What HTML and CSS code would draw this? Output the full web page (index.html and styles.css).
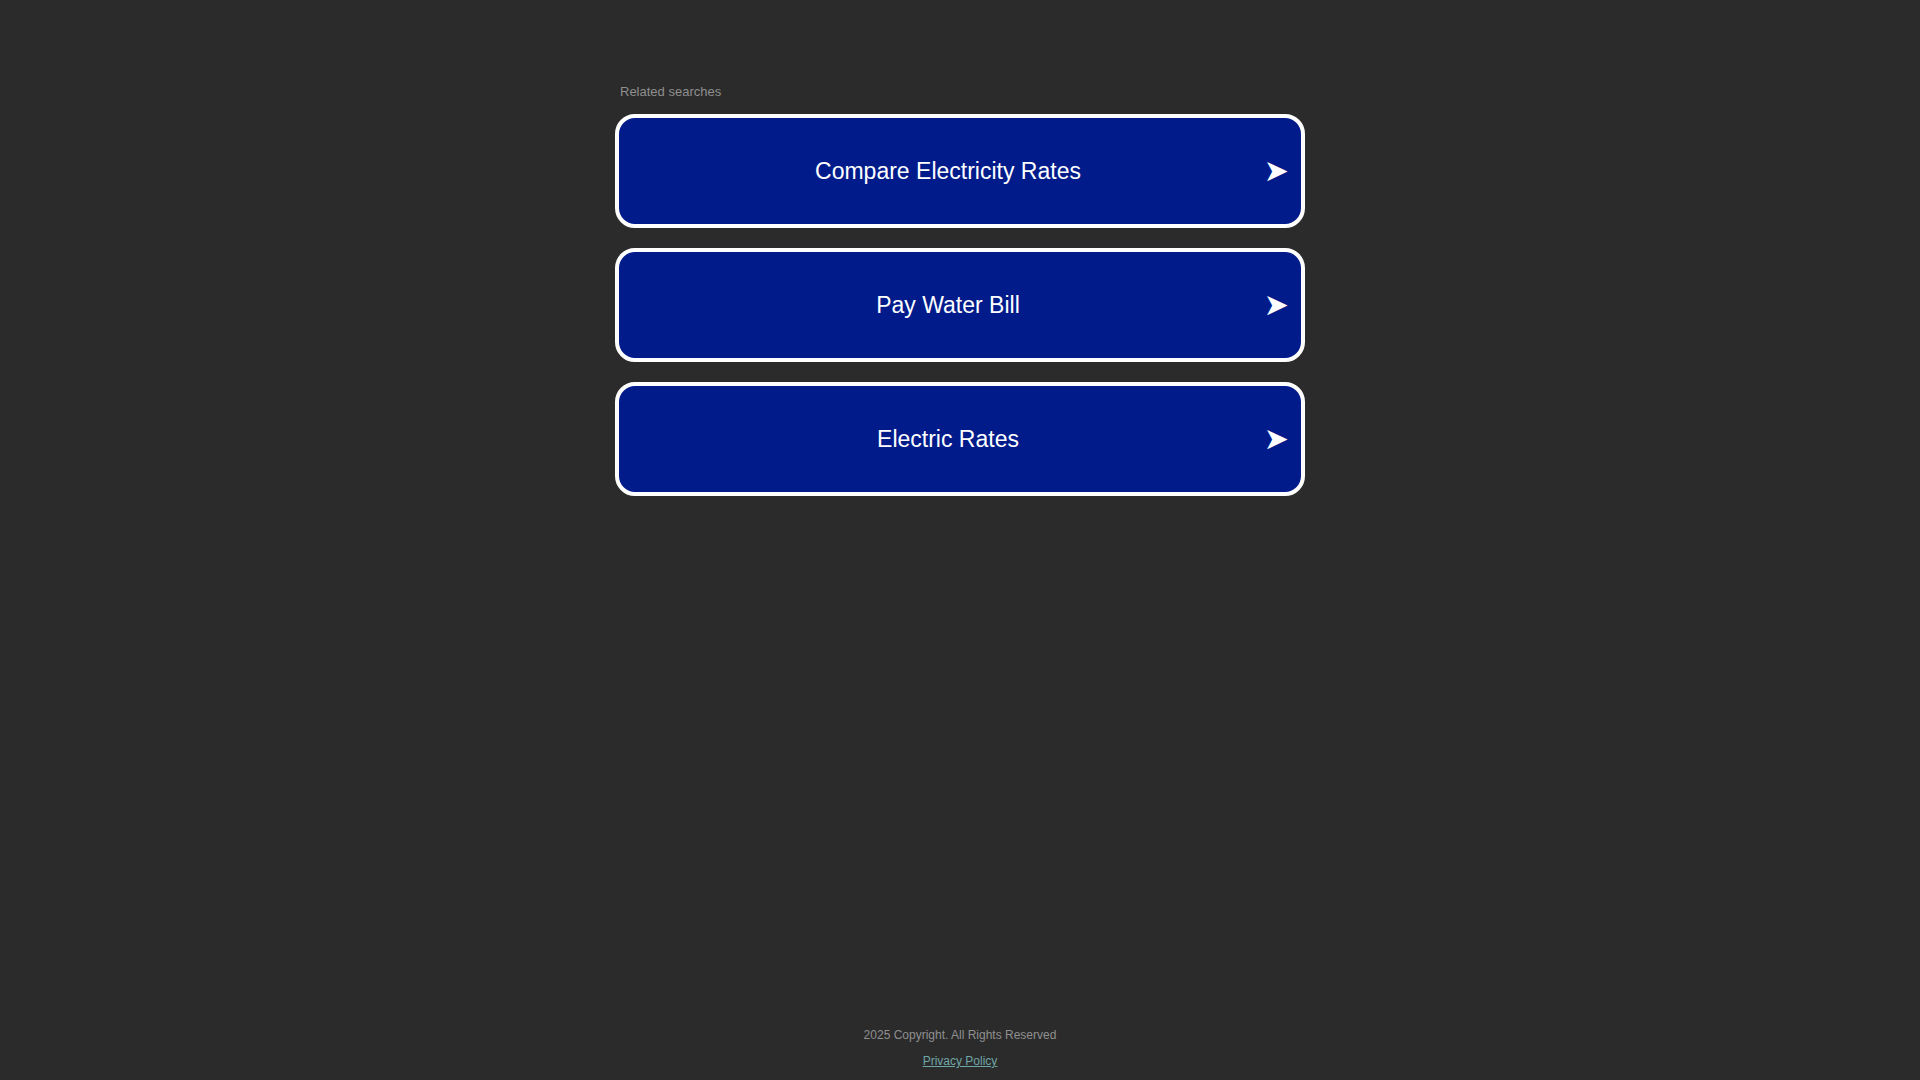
FILE: index.html
```html
<!DOCTYPE html>
<html>
<head>
<meta charset="utf-8">
<link rel="stylesheet" href="styles.css">
</head>
<body>
<div class="page">
  <main class="main">
    <div class="related">
      <div class="label">Related searches</div>
      <a class="item" href="#"><span class="text">Compare Electricity Rates</span><span class="arrow">➤</span></a>
      <a class="item" href="#"><span class="text">Pay Water Bill</span><span class="arrow">➤</span></a>
      <a class="item" href="#"><span class="text">Electric Rates</span><span class="arrow">➤</span></a>
    </div>
  </main>
  <footer class="footer">
    <div class="copy">2025 Copyright. All Rights Reserved</div>
    <a class="privacy" href="#">Privacy Policy</a>
  </footer>
</div>
</body>
</html>
```

FILE: styles.css
```css
html, body {
  margin: 0;
  padding: 0;
  height: 100%;
  background: #2b2b2b;
  font-family: "Liberation Sans", Arial, sans-serif;
}
.page {
  min-height: 100vh;
  display: flex;
  flex-direction: column;
  align-items: center;
}
.main {
  flex: 1;
  width: 690px;
  padding-top: 84px;
}
.related {
  display: flex;
  flex-direction: column;
  gap: 20px;
}
.label {
  color: #8f8f8f;
  font-size: 13px;
  line-height: 16px;
  padding-left: 5px;
  margin-bottom: -6px;
}
.item {
  box-sizing: border-box;
  height: 114px;
  border: 4px solid #ffffff;
  border-radius: 20px;
  background: #011b8b;
  display: flex;
  align-items: center;
  text-decoration: none;
  color: #ffffff;
  position: relative;
}
.text {
  flex: 1;
  text-align: center;
  font-size: 23px;
  padding-right: 24px;
}
.arrow {
  position: absolute;
  right: 12px;
  top: 50%;
  transform: translateY(-50%);
  font-family: "DejaVu Sans", sans-serif;
  font-size: 30px;
  line-height: 1;
  color: #ffffff;
}
.footer {
  display: flex;
  flex-direction: column;
  align-items: center;
  padding-bottom: 11px;
}
.copy {
  color: #8f8f8f;
  font-size: 12px;
  line-height: 16px;
}
.privacy {
  color: #6fa6a8;
  font-size: 12px;
  line-height: 16px;
  margin-top: 10px;
  text-decoration: underline;
}
```
